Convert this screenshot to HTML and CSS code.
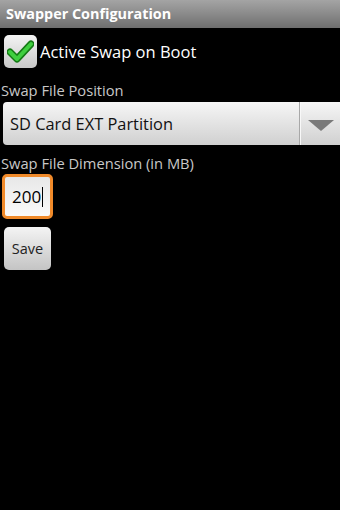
FILE: index.html
```html
<!DOCTYPE html>
<html lang="en">
<head>
    <meta charset="UTF-8">
    <title>Swapper Configuration</title>
    <link rel="stylesheet" href="styles.css">
</head>
<body>
    <div class="screen">
        <div class="title_bar">Swapper Configuration</div>
        <div class="content">
            <label class="check_row">
                <span class="checkbox">
                    <svg width="27" height="23" viewBox="0 0 27 23">
                        <path d="M3 12 L10 19 L24 4" fill="none" stroke="#157a15" stroke-width="7" stroke-linecap="round" stroke-linejoin="round"/>
                        <path d="M3 12 L10 19 L24 4" fill="none" stroke="#3fcf3f" stroke-width="4" stroke-linecap="round" stroke-linejoin="round"/>
                    </svg>
                </span>
                <span class="check_text">Active Swap on Boot</span>
            </label>
            <div class="label">Swap File Position</div>
            <div class="spinner">
                <span class="spinner_text">SD Card EXT Partition</span>
                <span class="spinner_arrow"></span>
            </div>
            <div class="label">Swap File Dimension (in MB)</div>
            <div class="edit">200<span class="cursor"></span></div>
            <button class="btn_save">Save</button>
        </div>
    </div>
</body>
</html>
```

FILE: styles.css
```css
html, body, div, span, label, button{
    margin: 0;
    padding: 0;
    border: 0;
}
body{
    background-color: #000;
    font-family: "Open Sans", "DejaVu Sans", sans-serif;
}
.screen{
    width: 340px;
    height: 510px;
    background-color: #000;
}
.title_bar{
    height: 28px;
    padding-left: 6px;
    background: linear-gradient(#a4a4a4, #8a8a8a 50%, #6e6e6e);
    color: #fff;
    font-size: 14.4px;
    font-weight: bold;
    line-height: 27px;
}
.content{
    padding: 6px 0 0 0;
}
.check_row{
    display: flex;
    align-items: center;
    gap: 3px;
    padding-left: 4px;
    height: 34px;
}
.checkbox{
    display: flex;
    align-items: center;
    justify-content: center;
    width: 33px;
    height: 33px;
    border-radius: 5px;
    background: linear-gradient(#f4f4f4, #c8c8c8);
}
.check_text{
    color: #fff;
    font-size: 16.5px;
}
.label{
    color: #c8c8c8;
    font-size: 14.7px;
    line-height: 20px;
    padding-left: 1px;
}
.content > .label:first-of-type{
    margin-top: 12px;
}
.spinner{
    display: flex;
    align-items: center;
    height: 43px;
    margin: 2px 0 8px 3px;
    border-radius: 4px 0 0 4px;
    background: linear-gradient(#f6f6f6, #d0d0d0);
}
.spinner_text{
    flex: 1;
    padding-left: 7px;
    color: #111;
    font-size: 16.4px;
}
.spinner_arrow{
    position: relative;
    width: 40px;
    height: 100%;
    border-left: 1px solid #a8a8a8;
    box-shadow: inset 1px 0 0 #f8f8f8;
}
.spinner_arrow:after{
    position: absolute;
    top: 18px;
    left: 8px;
    content: "";
    border-left: 13px solid transparent;
    border-right: 13px solid transparent;
    border-top: 11px solid #7a7a7a;
}
.edit{
    display: flex;
    align-items: center;
    width: 38px;
    height: 39px;
    margin: 1px 0 0 2px;
    padding-left: 7px;
    border: 3px solid #f08a2a;
    border-radius: 5px;
    background: linear-gradient(#e8e8e8, #fafafa);
    color: #000;
    font-size: 17px;
}
.cursor{
    display: inline-block;
    width: 1px;
    height: 20px;
    margin-left: 1px;
    background-color: #000;
}
.btn_save{
    display: block;
    width: 47px;
    height: 43px;
    margin: 8px 0 0 4px;
    border-radius: 5px;
    background: linear-gradient(#f4f4f4, #c4c4c4);
    color: #222;
    font-family: "Open Sans", "DejaVu Sans", sans-serif;
    font-size: 14.5px;
}
```
